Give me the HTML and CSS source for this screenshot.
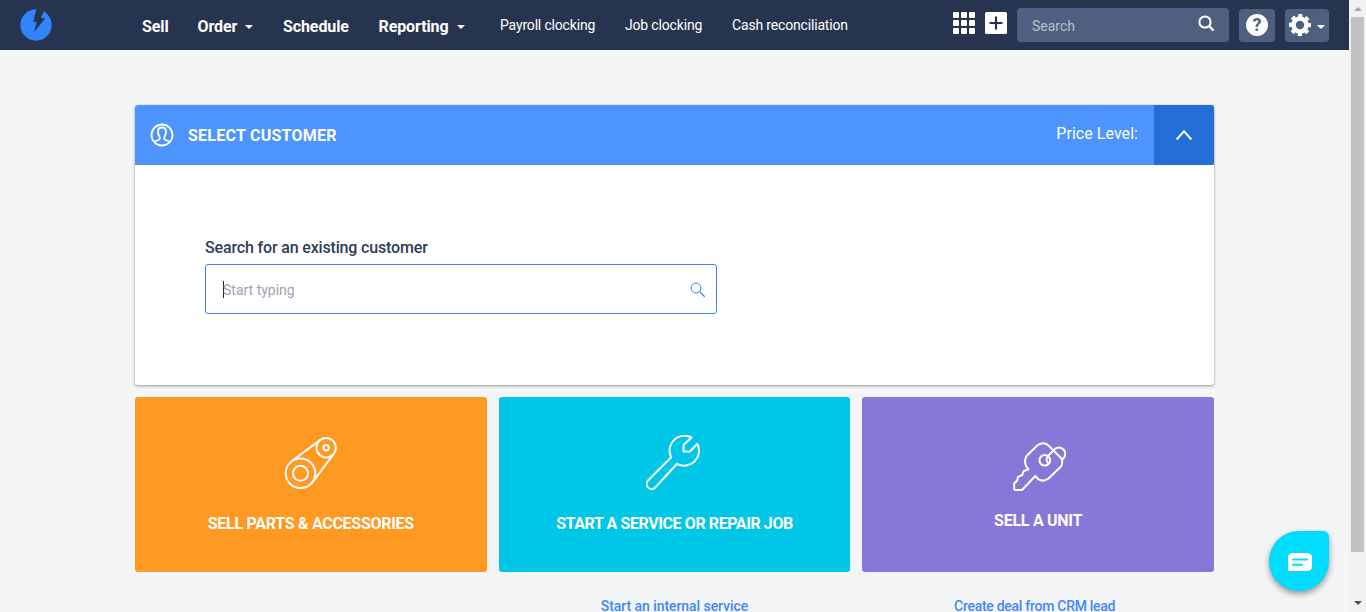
FILE: index.html
```html
<!DOCTYPE html>
<html lang="en">
<head>
<meta charset="utf-8">
<title>Sell</title>
<link rel="stylesheet" href="styles.css">
</head>
<body>
<div class="page">
  <header class="topbar">
    <svg class="logo" viewBox="20 9 32 32"><circle cx="36" cy="25" r="15.7" fill="#3385ff"/><path d="M36.6 8L33.2 22h3.6L34 32.2 45.2 18.6l-4.4-.8L43.9 11.6 47 7z" fill="#27344f"/></svg>
    <nav class="main-nav">
      <a class="n-sell">Sell</a>
      <a class="n-order">Order<i class="caret"></i></a>
      <a class="n-schedule">Schedule</a>
      <a class="n-reporting">Reporting<i class="caret"></i></a>
    </nav>
    <nav class="sub-nav">
      <a class="n-payroll">Payroll clocking</a>
      <a class="n-job">Job clocking</a>
      <a class="n-cash">Cash reconciliation</a>
    </nav>
    <div class="tools">
      <svg class="grid-icon" viewBox="0 0 22 22" fill="#fff"><rect width="6" height="6" rx="1"/><rect x="8" width="6" height="6" rx="1"/><rect x="16" width="6" height="6" rx="1"/><rect y="8" width="6" height="6" rx="1"/><rect x="8" y="8" width="6" height="6" rx="1"/><rect x="16" y="8" width="6" height="6" rx="1"/><rect y="16" width="6" height="6" rx="1"/><rect x="8" y="16" width="6" height="6" rx="1"/><rect x="16" y="16" width="6" height="6" rx="1"/></svg>
      <svg class="plus-icon" viewBox="0 0 22 22"><rect width="22" height="22" rx="1.5" fill="#fff"/><path d="M11 4.500v13M4.500 11h13" stroke="#27344f" stroke-width="2.200"/></svg>
      <div class="search"><span>Search</span><svg viewBox="0 0 17 17" fill="none" stroke="#fff" stroke-width="2"><circle cx="7" cy="7" r="5.600"/><path d="M11 11l4.500 4.500" stroke-width="2.400"/></svg></div>
      <div class="btn help"><span>?</span></div>
      <div class="btn gear"><svg viewBox="0 0 22 22" fill="none" stroke="#fff"><circle cx="11" cy="11" r="6.500" stroke-width="4.600"/><circle cx="11" cy="11" r="9.500" stroke-width="3" stroke-dasharray="4.200 3.261" stroke-dashoffset="2.100"/></svg><i class="caret"></i></div>
    </div>
  </header>
  <main>
    <section class="card">
      <div class="card-head">
        <svg class="user" viewBox="150 123 24 24" fill="none" stroke="#fff" stroke-width="1.800"><circle cx="162" cy="135" r="10.500"/><path d="M154.300 141.800c1.500-1.300 4-1.300 5.200-2.500.6-.8.4-1.900-.2-3-1.100-1.800-1.500-3.600-1.300-5.400.3-2.200 1.800-3.400 4-3.400s3.700 1.200 4 3.400c.2 1.800-.2 3.600-1.300 5.400-.6 1.100-.8 2.200-.2 3 1.200 1.200 3.700 1.200 5.200 2.500"/></svg>
        <h1>SELECT CUSTOMER</h1>
        <span class="price">Price Level:</span>
        <div class="toggle"><svg viewBox="0 0 18 12" fill="none" stroke="#fff" stroke-width="2"><path d="M1.700 10.500L9 2.200l7.300 8.300"/></svg></div>
      </div>
      <div class="card-body">
        <label>Search for an existing customer</label>
        <div class="field"><i class="cursor"></i><span>Start typing</span><svg viewBox="0 0 16 16" fill="none" stroke="#3385ff"><circle cx="6" cy="6" r="4.900"/><path d="M9.700 9.700l5 5" stroke-width="1.300"/></svg></div>
      </div>
    </section>
    <section class="tiles">
      <div class="tile parts">
        <svg viewBox="282.500 435 56 56"><circle cx="300" cy="473.300" r="14.800"/><circle cx="300" cy="473.300" r="7.500"/><circle cx="325.700" cy="447.700" r="9.700"/><circle cx="325.700" cy="447.700" r="2.700"/><path d="M291 461.300L319.900 439.900M312 482.300L333.500 453.500"/></svg>
        <span>SELL PARTS &amp; ACCESSORIES</span>
      </div>
      <div class="tile service">
        <svg viewBox="646.500 435.500 56 56"><path d="M692 438A14.800 14.800 0 0 0 671.700 457.700L648.500 481A5 5 0 0 0 655.700 488L677.500 464.300A14.800 14.800 0 0 0 697.700 444.300L690.500 452H684V445.500Z"/></svg>
        <span>START A SERVICE OR REPAIR JOB</span>
      </div>
      <div class="tile unit">
        <svg viewBox="1010 438 56 56"><path d="M1037.500 445.300Q1043.300 441.200 1048.500 445.500L1061 458Q1063.500 462 1061 466.500L1048.500 478.500Q1043 482.500 1038 479L1035.300 476 1022 490H1015.500Q1014.200 490 1014.200 488.800V483.200L1017.300 480.500 1018 476.800 1022.300 475 1023.500 471.200 1028.500 469.300C1025 466.500 1023.500 459 1027 455.500Z"/><circle cx="1044.800" cy="460.300" r="5.300"/><path d="M1048.500 463.500C1046.500 461.500 1046 458.500 1047.500 456.500L1053.500 450.200C1057 446.500 1061 447 1063.500 449.500C1066.500 452.500 1065.500 457 1062.300 459.500"/></svg>
        <span>SELL A UNIT</span>
      </div>
      <a></a>
      <a class="l-internal">Start an internal service</a>
      <a class="l-deal">Create deal from CRM lead</a>
    </section>
  </main>
</div>
<aside class="scrollbar"><i class="up"></i><div class="thumb"></div><i class="down"></i></aside>
<div class="chat"><svg viewBox="0 0 24 18"><path d="M5 0h14q5 0 5 5v8q0 5-5 5H0V5q0-5 5-5z" fill="#fff"/><path d="M5 6.500h14M5 11.800h9" stroke="#00dcff" stroke-width="2" stroke-linecap="round"/></svg></div>
</body>
</html>
```
FILE: styles.css
```css
* { box-sizing: border-box; }
body {
  margin: 0;
  width: 1366px;
  height: 612px;
  overflow: hidden;
  display: flex;
  background: #f3f5f7;
  font-family: Roboto, "Liberation Sans", sans-serif;
  color: #2e3d58;
}
svg { display: block; flex: none; }
a, span, label, h1 { white-space: nowrap; }
.page { width: 1349px; height: 612px; overflow: hidden; }
.topbar { height: 50px; background: #27344f; display: flex; color: #fff; }
.logo { width: 32px; height: 32px; margin: 9px 0 0 20px; }
.main-nav { display: flex; margin-left: 90px; width: 358px; padding-top: 16px; font-size: 16px; font-weight: 700; line-height: 21px; letter-spacing: -.1px; }
.n-sell { width: 55.500px; }
.n-order { width: 85.500px; }
.n-schedule { width: 95.500px; }
.caret { display: inline-block; border: 4px solid transparent; border-top-color: #fff; border-bottom: 0; vertical-align: 3px; margin-left: 8px; }
.sub-nav { display: flex; padding-top: 15px; font-size: 14px; line-height: 20px; letter-spacing: -.17px; }
.n-payroll { width: 125px; }
.n-job { width: 107px; }
.tools { display: flex; margin-left: auto; margin-right: 20px; }
.grid-icon, .plus-icon { width: 22px; height: 22px; margin-top: 12px; margin-right: 10px; }
.search { width: 212px; height: 34px; margin-top: 8px; background: #4f5f80; border-radius: 4px; display: flex; justify-content: space-between; padding: 0 14px 0 15px; font-size: 14px; line-height: 36px; color: #bac1ce; }
.search svg { width: 17px; height: 17px; margin-top: 7px; }
.btn { height: 33px; margin: 9px 0 0 10px; background: #4f5f80; border-radius: 4px; display: flex; }
.help { width: 36px; padding: 5px 7px; }
.help span { width: 22px; height: 22px; border-radius: 50%; background: #fff; color: #4f5f80; font-size: 18px; font-weight: 700; line-height: 22px; text-align: center; }
.gear { width: 44px; padding: 5px 4px; }
.gear svg { width: 22px; height: 22px; }
.gear .caret { margin: 11px 0 0 6px; height: 4px; }
main { padding: 55px 135px 0; }
.card { height: 280px; border-radius: 3px; background: #fff; box-shadow: 0 1px 3px rgba(0,0,0,.4); }
.card-head { height: 60px; background: #4d94ff; color: #fff; border-radius: 3px 3px 0 0; display: flex; align-items: center; padding-left: 15px; }
.user { width: 24px; height: 24px; }
h1 { margin: 2px 0 0 14px; font-size: 16px; font-weight: 700; line-height: 20px; letter-spacing: .25px; }
.price { margin-left: auto; margin-right: 16px; font-size: 16px; line-height: 20px; padding-bottom: 3px; letter-spacing: .05px; }
.toggle { width: 60px; height: 60px; background: #226dd7; border-radius: 0 3px 3px 0; display: grid; place-items: center; }
.toggle svg { width: 18px; height: 12px; }
.card-body { padding: 73px 70px 0; }
label { display: block; font-size: 16px; font-weight: 500; line-height: 20px; letter-spacing: -.16px; }
.field { width: 512px; height: 50px; margin-top: 6px; border: 1px solid #3385ff; border-radius: 3px; display: flex; align-items: center; padding: 0 10px 0 17px; font-size: 14px; color: #9ca3b1; }
.cursor { width: 1px; height: 17px; background: #17233b; margin-right: -1px; }
.field span { padding-top: 2px; }
.field svg { width: 16px; height: 16px; margin-left: auto; margin-top: 2px; }
.tiles { margin-top: 12px; display: grid; grid-template-columns: repeat(3, 1fr); column-gap: 12px; }
.tile { height: 175px; border-radius: 3px; display: flex; flex-direction: column; align-items: center; color: #fff; font-size: 16px; font-weight: 700; line-height: 20px; padding-top: 38px; }
.tile svg { width: 56px; height: 56px; fill: none; stroke: #fff; stroke-width: 2; stroke-linejoin: round; stroke-linecap: round; }
.tile span { margin-top: 23px; }
.parts { background: #ff9921; letter-spacing: -.28px; }
.service { background: #00c7e8; letter-spacing: -.41px; }
.unit { background: #8777d9; padding-top: 41px; letter-spacing: -.27px; }
.unit span { margin-top: 17px; }
.tiles a { text-align: center; padding-top: 28px; color: #4287fb; font-size: 14px; font-weight: 500; line-height: 12px; }
.l-internal { letter-spacing: -.06px; }
.l-deal { letter-spacing: -.28px; padding-right: 7px; }
.scrollbar { width: 17px; height: 612px; background: #f1f1f1; display: flex; flex-direction: column; align-items: center; }
.up, .down { border: 4px solid transparent; }
.up { border-top: 0; border-bottom-color: #a3a3a3; margin-top: 7px; }
.thumb { width: 13px; height: 535px; margin-top: 6px; background: #c1c1c1; }
.down { border-bottom: 0; border-top-color: #505050; margin-top: 49px; }
.chat { position: absolute; left: 1269px; top: 531px; width: 60px; height: 60px; border-radius: 30px 6px 30px 30px; background: #00dcff; box-shadow: 0 3px 6px rgba(0,0,0,.4); padding: 22px 0 0 19px; }
.chat svg { width: 24px; height: 18px; }
```
